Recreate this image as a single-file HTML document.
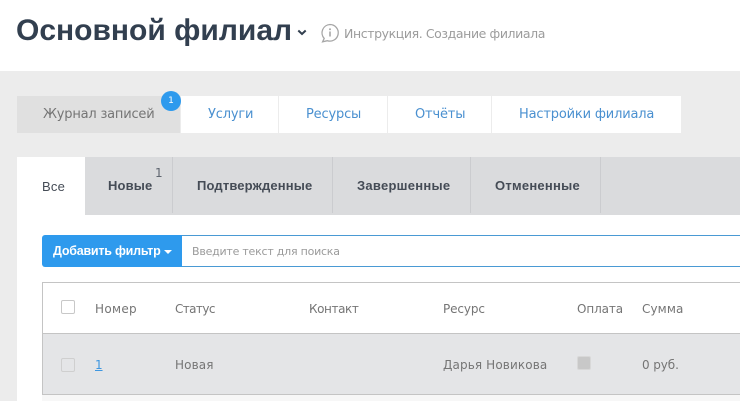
<!DOCTYPE html>
<html lang="ru"><head><meta charset="utf-8"><title>Основной филиал</title>
<style>
html,body{margin:0;padding:0;width:740px;height:401px;overflow:hidden;background:#ececec}
body{position:relative;font-family:"DejaVu Sans","Liberation Sans",sans-serif;}
div,span,a{position:absolute;white-space:nowrap;display:block}
.b{background:#fff}
.h{color:#757575;font-size:12px;line-height:16px;top:301px;letter-spacing:-.1px}
.r{color:#757575;font-size:12px;line-height:16px;top:357px;letter-spacing:-.1px}
.m{color:#4a90d0;font-size:13px;line-height:18px;top:106px;letter-spacing:-.17px}
.s{color:#454c56;font-weight:bold;font-family:"Liberation Sans",sans-serif;line-height:16px;top:178px;font-size:13px;letter-spacing:.15px}
.sep{background:#cbcccf;width:1px;top:157px;height:56px}
</style></head><body>
<div class="b" style="left:0;top:0;width:740px;height:71px"></div>
<span style="left:16px;top:11px;font:bold 30px/40px 'Liberation Sans',sans-serif;color:#323f4f;letter-spacing:0">Основной филиал</span>
<svg style="position:absolute;left:296px;top:29px" width="12" height="8" viewBox="0 0 12 8"><path d="M2.3 1.5L6 5L9.7 1.5" fill="none" stroke="#323f4f" stroke-width="2"/></svg>
<svg style="position:absolute;left:320px;top:23px" width="20" height="20" viewBox="0 0 20 20"><path d="M10 1.5a8.3 8.3 0 1 1-2.6 16.2L2.6 18.8L4.2 15.4A8.3 8.3 0 0 1 10 1.5Z" fill="none" stroke="#a6a6a6" stroke-width="1.3"/><path d="M10 8.5V13.5" stroke="#a6a6a6" stroke-width="1.6"/><circle cx="10" cy="6.2" r="1" fill="#a6a6a6"/></svg>
<span style="left:344px;top:26px;font-size:12.5px;line-height:16px;color:#9c9c9c;letter-spacing:-.4px">Инструкция. Создание филиала</span>

<div style="left:17px;top:96px;width:163px;height:37px;background:#e0e0e0"></div>
<div class="b" style="left:181px;top:96px;width:500px;height:37px"></div>
<div style="left:278px;top:96px;width:1px;height:37px;background:#ececec"></div>
<div style="left:387px;top:96px;width:1px;height:37px;background:#ececec"></div>
<div style="left:491px;top:96px;width:1px;height:37px;background:#ececec"></div>
<span style="left:43px;top:106px;color:#757575;font-size:13px;line-height:18px;letter-spacing:-.2px">Журнал записей</span>
<span class="m" style="left:208px">Услуги</span>
<span class="m" style="left:306px">Ресурсы</span>
<span class="m" style="left:415px">Отчёты</span>
<span class="m" style="left:519px">Настройки филиала</span>
<div style="left:161px;top:91px;width:20px;height:20px;border-radius:50%;background:#2e9aed;color:#fff;font-size:9px;line-height:20px;text-align:center">1</div>

<div class="b" style="left:17px;top:157px;width:723px;height:244px"></div>
<div style="left:85px;top:157px;width:655px;height:58px;background:#dadbdd"></div>
<div class="sep" style="left:172px"></div>
<div class="sep" style="left:332px"></div>
<div class="sep" style="left:470px"></div>
<div class="sep" style="left:600px"></div>
<span class="s" style="left:42px;top:179px;font-weight:normal;letter-spacing:.2px">Все</span>
<span class="s" style="left:108px;letter-spacing:.15px">Новые</span>
<span style="left:155px;top:166px;color:#5f6670;font-size:12px;line-height:14px">1</span>
<span class="s" style="left:197px">Подтвержденные</span>
<span class="s" style="left:357px;letter-spacing:.26px">Завершенные</span>
<span class="s" style="left:495px;letter-spacing:.25px">Отмененные</span>

<div style="left:182px;top:235px;width:558px;height:30px;border-top:1px solid #4a9ad4;border-bottom:1px solid #4a9ad4;background:#fff"></div>
<div style="left:42px;top:235px;width:140px;height:32px;background:#2e9aed;border-radius:3px 0 0 3px"></div>
<span style="left:53px;top:243px;color:#fff;font:bold 12.5px/16px 'Liberation Sans',sans-serif;letter-spacing:-.23px">Добавить фильтр</span>
<div style="left:164px;top:250px;width:0;height:0;border-left:4px solid transparent;border-right:4px solid transparent;border-top:4px solid #fff"></div>
<span style="left:192px;top:244px;color:#9a9a9a;font-size:11px;line-height:16px;letter-spacing:-.23px">Введите текст для поиска</span>

<div style="left:42px;top:282px;width:698px;height:1px;background:#c4c4c4"></div>
<div style="left:42px;top:282px;width:1px;height:113px;background:#c4c4c4"></div>
<div style="left:43px;top:334px;width:697px;height:60px;background:#e4e5e7"></div>
<div style="left:42px;top:333px;width:698px;height:1px;background:#c4c4c4"></div>
<div style="left:42px;top:394px;width:698px;height:1px;background:#c4c4c4"></div>
<div style="left:42px;top:395px;width:698px;height:6px;background:#f7f7f7"></div>
<div style="left:61px;top:300px;width:12px;height:12px;border:1px solid #c8c8c8;border-radius:2px;background:#fff"></div>
<div style="left:61px;top:358px;width:12px;height:12px;border:1px solid #cfcfcf;border-radius:2px;background:#e4e5e7"></div>
<div style="left:577px;top:356px;width:12px;height:12px;border:1px solid #d8d8d8;border-radius:2px;background:#c8c8c8"></div>
<span class="h" style="left:95px;letter-spacing:.3px">Номер</span>
<span class="h" style="left:175px;letter-spacing:-.6px">Статус</span>
<span class="h" style="left:309px;letter-spacing:-.4px">Контакт</span>
<span class="h" style="left:443px">Ресурс</span>
<span class="h" style="left:577px">Оплата</span>
<span class="h" style="left:642px;letter-spacing:.1px">Сумма</span>
<a class="r" style="left:95px;color:#3f97e0;text-decoration:underline">1</a>
<span class="r" style="left:175px;letter-spacing:.1px">Новая</span>
<span class="r" style="left:443px;letter-spacing:.12px">Дарья Новикова</span>
<span class="r" style="left:642px">0 руб.</span>
</body></html>
